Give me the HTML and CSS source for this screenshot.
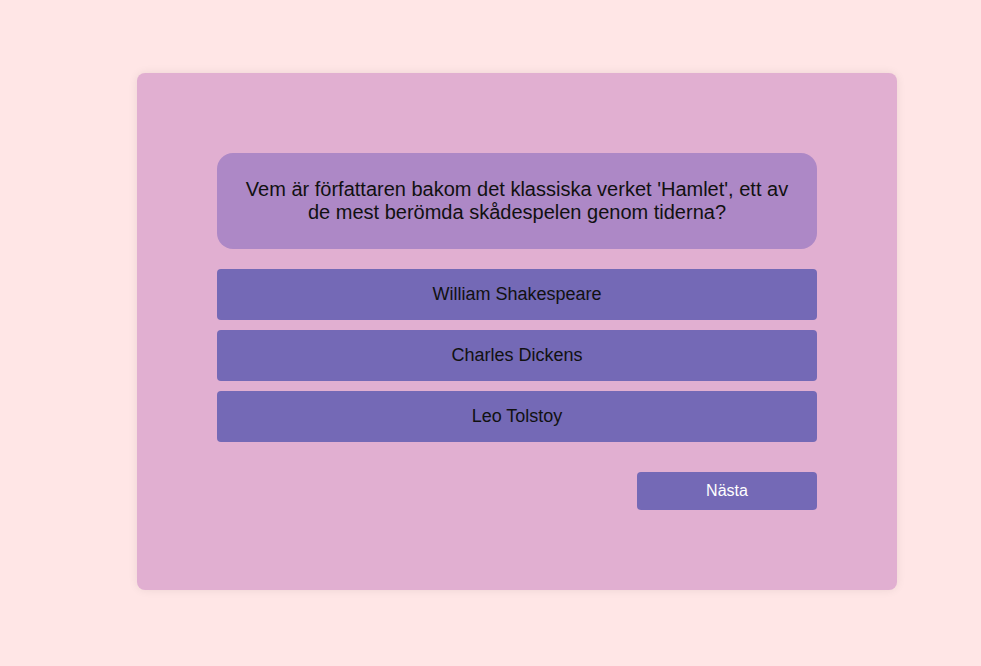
FILE: index.html
```html
<!DOCTYPE html>
<html lang="sv">
<head>
<meta charset="utf-8">
<title>Quiz</title>
<link rel="stylesheet" href="styles.css">
</head>
<body>
<main class="quiz-card">
  <div class="question">Vem är författaren bakom det klassiska verket 'Hamlet', ett av de mest berömda skådespelen genom tiderna?</div>
  <div class="options">
    <button class="option">William Shakespeare</button>
    <button class="option">Charles Dickens</button>
    <button class="option">Leo Tolstoy</button>
  </div>
  <div class="actions">
    <button class="next">Nästa</button>
  </div>
</main>
</body>
</html>
```
FILE: styles.css
```css
html, body {
  margin: 0;
  padding: 0;
}
body {
  background: #ffe6e6;
  font-family: "Liberation Sans", Arial, sans-serif;
  padding: 73px 0 0 137px;
  min-height: 666px;
  box-sizing: border-box;
}
.quiz-card {
  width: 760px;
  box-sizing: border-box;
  padding: 80px;
  background: #e1afd1;
  border-radius: 8px;
  box-shadow: 0 0 10px rgba(0, 0, 0, 0.08);
}
.question {
  background: #ad88c6;
  border-radius: 16px;
  padding: 25px 20px;
  font-size: 20px;
  line-height: 23px;
  text-align: center;
  color: #111;
}
.options {
  margin-top: 20px;
  display: flex;
  flex-direction: column;
  gap: 10px;
}
.option {
  display: block;
  width: 100%;
  border: none;
  background: #7469b6;
  border-radius: 4px;
  padding: 15px;
  font-family: inherit;
  font-size: 18px;
  line-height: 21px;
  color: #111;
  text-align: center;
}
.actions {
  margin-top: 30px;
  display: flex;
  justify-content: flex-end;
}
.next {
  width: 180px;
  border: none;
  background: #7469b6;
  border-radius: 4px;
  padding: 10px;
  font-family: inherit;
  font-size: 16px;
  line-height: 18px;
  color: #fff;
}
```
